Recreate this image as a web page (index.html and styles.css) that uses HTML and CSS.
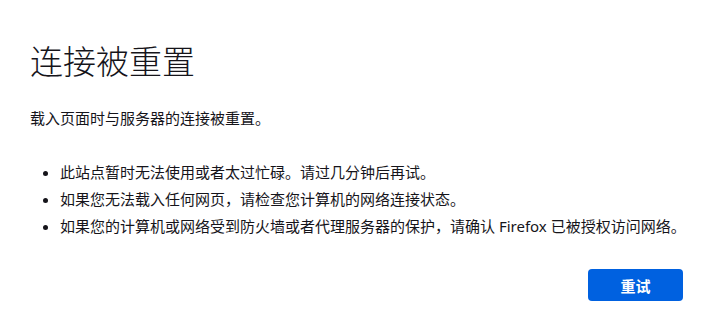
FILE: index.html
```html
<!DOCTYPE html>
<html lang="zh-CN">
<head>
<meta charset="utf-8">
<title>连接被重置</title>
<link rel="stylesheet" href="styles.css">
</head>
<body>
<main class="container">
  <h1 class="title">连接被重置</h1>
  <p class="desc">载入页面时与服务器的连接被重置。</p>
  <ul class="tips">
    <li>此站点暂时无法使用或者太过忙碌。请过几分钟后再试。</li>
    <li>如果您无法载入任何网页，请检查您计算机的网络连接状态。</li>
    <li>如果您的计算机或网络受到防火墙或者代理服务器的保护，请确认 Firefox 已被授权访问网络。</li>
  </ul>
  <div class="actions">
    <button class="retry">重试</button>
  </div>
</main>
</body>
</html>
```

FILE: styles.css
```css
html, body {
  margin: 0;
  padding: 0;
  background: #ffffff;
}
body {
  font-family: "Noto Sans", "Noto Sans CJK SC", sans-serif;
  color: #15141a;
  font-size: 15px;
}
.container {
  margin: 0 0 0 30px;
  padding-top: 38px;
}
.title {
  margin: 0;
  font-size: 33px;
  font-weight: 300;
  line-height: 48px;
}
.desc {
  margin: 21px 0 0;
  line-height: 22px;
}
.tips {
  margin: 32px 0 0;
  padding-left: 30px;
  list-style: disc;
}
.tips li {
  line-height: 22px;
  margin-bottom: 5px;
  white-space: nowrap;
}
.actions {
  display: flex;
  justify-content: flex-end;
  margin-top: 32px;
  margin-right: 19px;
}
.retry {
  width: 95px;
  height: 32px;
  border: none;
  border-radius: 4px;
  background: #0061e0;
  color: #fff;
  font-family: "Noto Sans", "Noto Sans CJK SC", sans-serif;
  font-size: 15px;
  font-weight: 700;
  padding: 0;
}
```
